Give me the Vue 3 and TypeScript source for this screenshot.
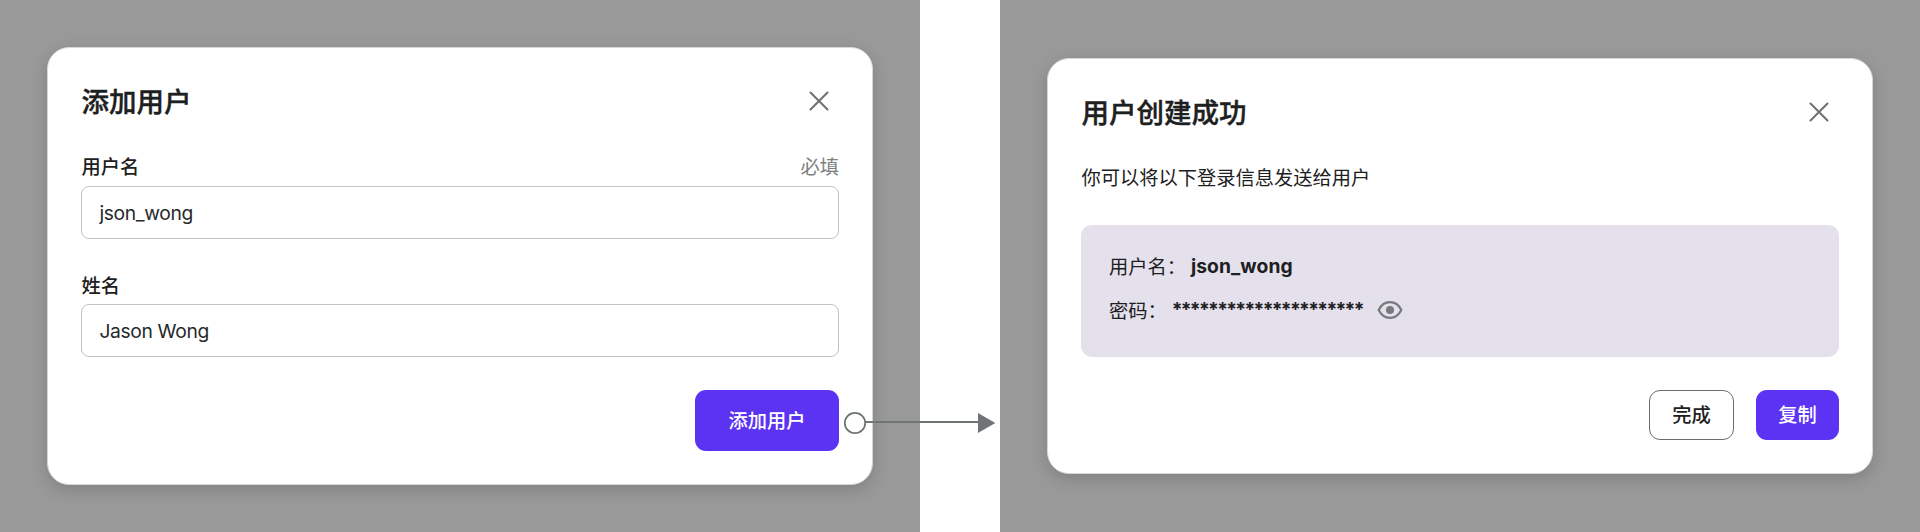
<script setup lang="ts">
import { ref } from 'vue'

interface Field {
  id: string
  label: string
  hint?: string
  value: string
}

const fields = ref<Field[]>([
  { id: 'username', label: '用户名', hint: '必填', value: 'json_wong' },
  { id: 'fullname', label: '姓名', value: 'Jason Wong' },
])
const maskedPassword = '*'.repeat(21)
</script>

<template>
  <main class="flow">
    <section class="stage stage-form">
      <form class="dialog" @submit.prevent>
        <header class="head">
          <h2 class="title">添加用户</h2>
          <button class="close" type="button" aria-label="关闭">
            <svg viewBox="0 0 20 20" width="20" height="20">
              <path d="M1.500 1.500 18.500 18.500M18.500 1.500 1.500 18.500" />
            </svg>
          </button>
        </header>
        <div v-for="field in fields" :key="field.id" class="field">
          <div class="label-row">
            <label class="label" :for="field.id">{{ field.label }}</label>
            <span v-if="field.hint" class="hint">{{ field.hint }}</span>
          </div>
          <input :id="field.id" v-model="field.value" class="input" type="text" />
        </div>
        <footer class="actions">
          <button class="btn primary large" type="submit">添加用户</button>
        </footer>
      </form>
    </section>

    <section class="stage stage-result">
      <div class="dialog">
        <header class="head">
          <h2 class="title">用户创建成功</h2>
          <button class="close" type="button" aria-label="关闭">
            <svg viewBox="0 0 20 20" width="20" height="20">
              <path d="M1.500 1.500 18.500 18.500M18.500 1.500 1.500 18.500" />
            </svg>
          </button>
        </header>
        <p class="message">你可以将以下登录信息发送给用户</p>
        <div class="info">
          <div class="info-row">
            <span class="key">用户名：</span>
            <strong class="account">json_wong</strong>
          </div>
          <div class="info-row">
            <span class="key">密码：</span>
            <strong class="secret">{{ maskedPassword }}</strong>
            <svg class="eye" viewBox="0 0 26 20" width="26" height="20">
              <path d="M1.700 10C4.200 4.900 8.200 2.200 13 2.200s8.800 2.700 11.300 7.800c-2.500 5.100-6.500 7.800-11.300 7.800S4.200 15.100 1.700 10Z" />
              <circle cx="13" cy="10" r="4" />
            </svg>
          </div>
        </div>
        <footer class="actions">
          <button class="btn outline" type="button">完成</button>
          <button class="btn primary" type="button">复制</button>
        </footer>
      </div>
    </section>

    <svg class="connector" viewBox="0 0 154 24" width="154" height="24">
      <path class="wire" d="M23 11H136" />
      <circle class="origin" cx="12" cy="12" r="10.200" />
      <path class="tip" d="M135 2 152.300 12 135 22Z" />
    </svg>
  </main>
</template>

<style>
body {
  margin: 0;
  background: #fff;
}
</style>

<style scoped>
.flow {
  position: relative;
  display: grid;
  grid-template-columns: 920px 920px;
  column-gap: 80px;
  height: 532px;
  overflow: hidden;
  font-family: Inter, "Noto Sans CJK SC", sans-serif;
  font-size: 19.25px;
  color: #1d2021;
}
.flow * {
  box-sizing: border-box;
}
.stage {
  background: #999;
  padding-left: 47px;
  overflow: hidden;
}
.stage-form {
  padding-top: 47px;
}
.stage-result {
  padding-top: 58px;
}
.dialog {
  width: 826px;
  height: 438px;
  padding: 32px 33px 0 33.4px;
  background: #fff;
  border: 1px solid #d5d7d8;
  border-radius: 22px;
  box-shadow: 0 5px 16px rgba(0, 0, 0, 0.16);
}
.stage-result .dialog {
  height: 416px;
}
.head {
  display: flex;
  align-items: center;
  justify-content: space-between;
  height: 42px;
  padding-right: 10px;
}
.title {
  margin: 0;
  padding-top: 1px;
  font-size: 27.5px;
  line-height: 42px;
  font-weight: 500;
  -webkit-text-stroke: 0.4px currentColor;
}
.close {
  display: flex;
  padding: 0;
  border: 0;
  background: none;
}
.close path {
  fill: none;
  stroke: #6f7273;
  stroke-width: 2.1;
  stroke-linecap: round;
}
.field {
  height: 87px;
  margin-top: 31px;
}
.label-row {
  display: flex;
  justify-content: space-between;
  height: 33px;
  line-height: 28px;
}
.field + .field .label-row {
  line-height: 30px;
}
.label {
  font-weight: 500;
}
.hint {
  color: #7b7f80;
}
.input {
  display: block;
  width: 100%;
  height: 53px;
  padding: 0 16px 0 17px;
  border: 1px solid #c0c3c4;
  border-radius: 8px;
  background: #fff;
  color: #26292b;
  font: inherit;
  letter-spacing: -0.35px;
  outline: none;
}
.actions {
  display: flex;
  justify-content: flex-end;
  gap: 22px;
  margin-top: 33px;
}
.field + .actions {
  margin-top: 32px;
}
.btn {
  width: 83px;
  height: 49.5px;
  padding: 0 0 2px;
  border: 0;
  border-radius: 11px;
  font: inherit;
  font-weight: 500;
}
.btn.primary {
  background: #5c33f2;
  color: #fff;
}
.btn.large {
  width: 144px;
  height: 61px;
}
.btn.outline {
  width: 85px;
  border: 1px solid #6c6c74;
  background: #fff;
  color: #1d2021;
}
.message {
  margin: 31px 0 0;
  height: 61px;
  line-height: 28px;
}
.info {
  height: 132px;
  padding: 19px 27.500px;
  border-radius: 11px;
  background: #e4e1ec;
}
.info-row {
  display: flex;
  align-items: center;
  height: 44px;
}
.account {
  margin-left: 5px;
  font-weight: 700;
  letter-spacing: 0.1px;
}
.secret {
  height: 26px;
  margin-left: 5px;
  font-weight: 700;
  letter-spacing: -1.66px;
}
.eye {
  margin-left: 14px;
}
.eye path {
  fill: none;
  stroke: #77797d;
  stroke-width: 2.2;
}
.eye circle {
  fill: #77797d;
}
/* Link from the submit button to the confirmation dialog */
.connector {
  position: absolute;
  left: 843px;
  top: 411px;
}
.wire {
  stroke: #6f7576;
  stroke-width: 2;
}
.origin {
  fill: #fff;
  stroke: #6f7576;
  stroke-width: 1.8;
}
.tip {
  fill: #6f7576;
}
</style>
